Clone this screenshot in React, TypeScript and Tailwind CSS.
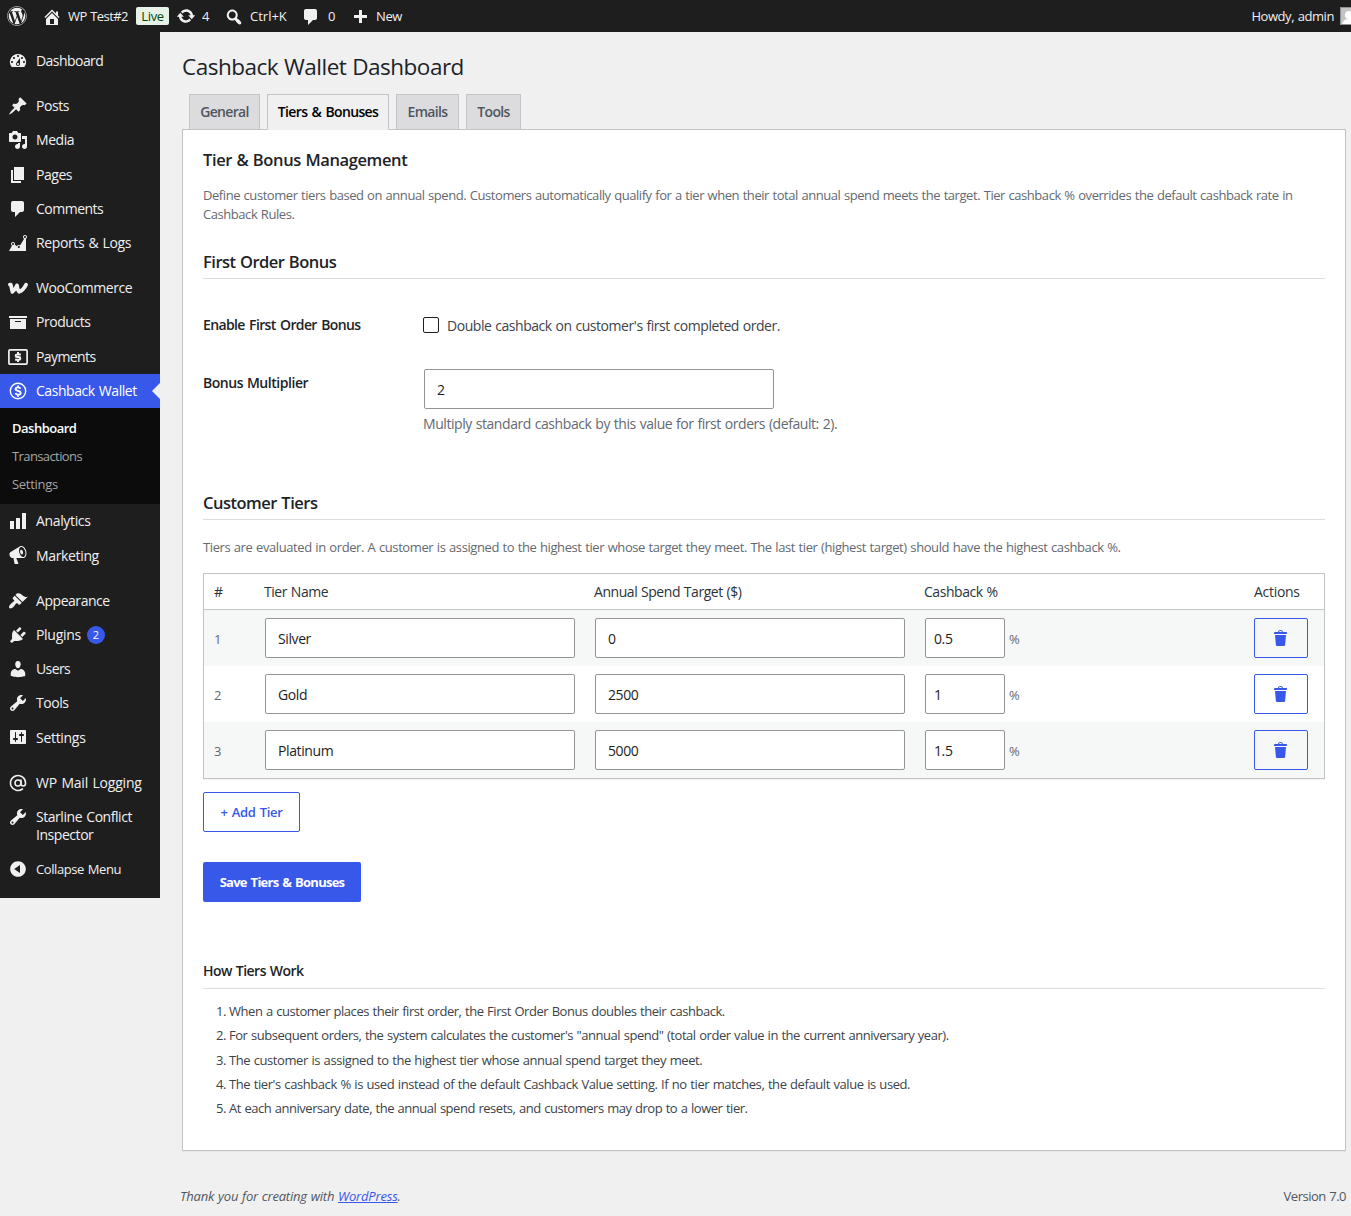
import React, { useState } from 'react';
import { AtSign } from 'lucide-react';
import { FaWordpress } from 'react-icons/fa';
import clsx from 'clsx';

const ICONS = {
  dashboard: 'M3.76 16h12.48A7.998 7.998 0 0 0 10 3a7.998 7.998 0 0 0-6.24 13zM10 4c.55 0 1 .45 1 1s-.45 1-1 1-1-.45-1-1 .45-1 1-1zM6 6c.55 0 1 .45 1 1s-.45 1-1 1-1-.45-1-1 .45-1 1-1zm8 0c.55 0 1 .45 1 1s-.45 1-1 1-1-.45-1-1 .45-1 1-1zm-5.37 5.55L12 7v6c0 1.1-.9 2-2 2s-2-.9-2-2c0-.57.24-1.08.63-1.45zM4 10c.55 0 1 .45 1 1s-.45 1-1 1-1-.45-1-1 .45-1 1-1zm12 0c.55 0 1 .45 1 1s-.45 1-1 1-1-.45-1-1 .45-1 1-1zm-5 3c0-.55-.45-1-1-1s-1 .45-1 1 .45 1 1 1 1-.45 1-1z',
  post: 'M10.44 3.02l1.82-1.82 6.36 6.35-1.83 1.82c-1.05-.68-2.48-.57-3.41.36l-.75.75c-.92.93-1.04 2.35-.35 3.41l-1.83 1.82-2.41-2.41-2.8 2.79c-.42.42-3.38 2.71-3.8 2.29s1.86-3.39 2.28-3.81l2.79-2.79L4.1 9.36l1.83-1.82c1.05.69 2.48.57 3.4-.36l.75-.75c.93-.92 1.05-2.35.36-3.41z',
  media: 'M13 11V4c0-.55-.45-1-1-1h-1.67L9 1H5L3.67 3H2c-.55 0-1 .45-1 1v7c0 .55.45 1 1 1h10c.55 0 1-.45 1-1zM7 4.5c1.38 0 2.5 1.12 2.5 2.5S8.38 9.5 7 9.5 4.5 8.38 4.5 7 5.62 4.5 7 4.5zM14 6h5v10.5c0 1.38-1.12 2.5-2.5 2.5S14 17.88 14 16.5s1.12-2.5 2.5-2.5c.17 0 .34.02.5.05V9h-3V6zm-4 8.05V13h2v3.5c0 1.38-1.12 2.5-2.5 2.5S7 17.88 7 16.5 8.12 14 9.5 14c.17 0 .34.02.5.05z',
  page: 'M6 15V2h10v13H6zm-1 1h8v2H3V5h2v11z',
  comments: 'M5 2h9c1.1 0 2 .9 2 2v7c0 1.1-.9 2-2 2h-2l-5 5v-5H5c-1.1 0-2-.9-2-2V4c0-1.1.9-2 2-2z',
  chartArea: 'M18 18l.01-12.28c.59-.35.99-.99.99-1.72 0-1.1-.9-2-2-2s-2 .9-2 2c0 .8.47 1.48 1.14 1.8l-4.13 6.58c-.33-.24-.73-.38-1.16-.38-.84 0-1.55.51-1.85 1.24l-2.14-1.53c.09-.22.14-.46.14-.71 0-1.11-.89-2-2-2-1.1 0-2 .89-2 2 0 .73.4 1.36.98 1.71L1 18h17zM17 3c.55 0 1 .45 1 1s-.45 1-1 1-1-.45-1-1 .45-1 1-1zM5 10c.55 0 1 .45 1 1s-.45 1-1 1-1-.45-1-1 .45-1 1-1zm5.85 3c.55 0 1 .45 1 1s-.45 1-1 1-1-.45-1-1 .45-1 1-1z',
  archive: 'M19 4v2H1V4h18zM2 7h16v10H2V7zm11 3V9H7v1h6z',
  chartBar: 'M18 18V2h-4v16h4zm-6 0V7H8v11h4zm-6 0v-8H2v8h4z',
  megaphone: 'M18.15 5.94c.46 1.62.38 3.22-.02 4.48-.42 1.28-1.26 2.18-2.3 2.48-.16.06-.26.06-.4.06-.06.02-.12.02-.18.02-.06.02-.14.02-.22.02h-6.8l2.22 5.5c.02.14-.06.26-.14.34-.08.1-.24.16-.34.16H6.95c-.1 0-.26-.06-.34-.16-.08-.08-.16-.2-.14-.34l-1-5.5H4.25l-.02-.02c-.5.06-1.08-.18-1.54-.62s-.88-1.08-1.06-1.88c-.24-.8-.2-1.56-.02-2.2.18-.62.58-1.08 1.06-1.3l.02-.02 9-5.4c.1-.06.18-.1.24-.16.06-.04.14-.08.24-.12.16-.08.28-.12.5-.18 1.04-.3 2.24.1 3.22.98s1.84 2.24 2.26 3.86zm-2.58 5.98h-.02c.4-.1.74-.34 1.04-.7.58-.7.86-1.76.86-3.04 0-.64-.1-1.3-.28-1.98-.34-1.36-1.02-2.5-1.78-3.24s-1.68-1.1-2.46-.88c-.82.22-1.4.96-1.7 2-.32 1.04-.28 2.36.06 3.72.38 1.36 1 2.5 1.8 3.24.78.74 1.62 1.1 2.48.88zm-2.54-7.08c.22-.04.42-.02.62.04.38.16.76.48 1.02 1s.42 1.2.42 1.78c0 .3-.04.56-.12.8-.18.48-.44.84-.86.94-.34.1-.8-.06-1.14-.4s-.64-.86-.78-1.5c-.18-.62-.12-1.24.02-1.72s.48-.84.82-.94z',
  appearance: 'M14.48 11.06L7.41 3.99l1.5-1.5c.5-.56 2.3-.47 3.51.32 1.21.8 1.43 1.28 2.91 2.1 1.18.64 2.45 1.26 4.45.85zm-.71.71L6.7 4.7 4.93 6.47c-.39.39-.39 1.02 0 1.41l1.06 1.06c.39.39.39 1.03 0 1.42-.6.6-1.43 1.11-2.21 1.69-.35.26-.7.53-1.01.84C1.43 14.23.4 16.08 1.4 17.07c.99 1 2.84-.03 4.18-1.36.31-.31.58-.66.85-1.02.57-.78 1.08-1.61 1.69-2.21.39-.39 1.02-.39 1.41 0l1.06 1.06c.39.39 1.02.39 1.41 0z',
  plugins: 'M13.11 4.36L9.87 7.6 8 5.73l3.24-3.24c.35-.34 1.05-.2 1.56.32.52.51.66 1.21.31 1.55zm-8 1.77l.91-1.12 9.01 9.01-1.19.84c-.71.71-2.63 1.16-3.82 1.16H6.14L4.9 17.26c-.59.59-1.54.59-2.12 0-.59-.58-.59-1.53 0-2.12l1.24-1.24v-3.88c0-1.13.4-3.19 1.09-3.89zm7.26 3.97l3.24-3.24c.34-.35 1.04-.21 1.55.31.52.51.66 1.21.31 1.55l-3.24 3.25z',
  users: 'M10 9.25c-2.27 0-2.73-3.44-2.73-3.44C7 4.02 7.82 2 9.97 2c2.16 0 2.98 2.02 2.71 3.81 0 0-.41 3.44-2.68 3.44zm0 2.57L12.72 10c2.39 0 4.52 2.33 4.52 4.53v2.49s-3.65 1.13-7.24 1.13c-3.65 0-7.24-1.13-7.24-1.13v-2.49c0-2.25 1.94-4.48 4.47-4.48z',
  tools: 'M16.68 9.77c-1.34 1.34-3.3 1.67-4.95.99l-5.41 6.52c-.99.99-2.59.99-3.58 0s-.99-2.59 0-3.57l6.52-5.42c-.68-1.65-.35-3.61.99-4.95 1.28-1.28 3.12-1.62 4.72-1.06l-2.89 2.89 2.82 2.82 2.86-2.87c.53 1.58.18 3.39-1.08 4.65zM3.81 16.21c.4.39 1.04.39 1.43 0 .4-.4.4-1.04 0-1.43-.39-.4-1.03-.4-1.43 0-.39.39-.39 1.03 0 1.43z',
  settings: 'M18 16V4c0-.55-.45-1-1-1H3c-.55 0-1 .45-1 1v12c0 .55.45 1 1 1h14c.55 0 1-.45 1-1zM8 11h1c.55 0 1 .45 1 1s-.45 1-1 1H8v1.5c0 .28-.22.5-.5.5s-.5-.22-.5-.5V13H6c-.55 0-1-.45-1-1s.45-1 1-1h1V5.5c0-.28.22-.5.5-.5s.5.22.5.5V11zm5-2h-1c-.55 0-1-.45-1-1s.45-1 1-1h1V5.5c0-.28.22-.5.5-.5s.5.22.5.5V7h1c.55 0 1 .45 1 1s-.45 1-1 1h-1v5.5c0 .28-.22.5-.5.5s-.5-.22-.5-.5V9z',
  collapse: 'M10 2.16c4.33 0 7.84 3.51 7.84 7.84s-3.51 7.84-7.84 7.84S2.16 14.33 2.16 10 5.71 2.16 10 2.16zm2 11.72V6.12L6.18 9.97z',
  home: 'M16 8.5l1.53 1.53-1.06 1.06L10 4.6l-6.47 6.49-1.06-1.06L10 2.5l4 4v-2h2v4zm-6-2.46l6 5.99V18H4v-5.97zM12 17v-5H8v5h4z',
  update: 'M10.2 3.28c3.53 0 6.43 2.61 6.92 6h2.08l-3.5 4-3.5-4h2.32c-.45-1.97-2.21-3.45-4.32-3.45-1.45 0-2.73.71-3.54 1.78L4.95 5.66C6.23 4.2 8.11 3.28 10.2 3.28zm-.4 13.44c-3.52 0-6.43-2.61-6.92-6H.8l3.5-4c1.17 1.33 2.33 2.67 3.5 4H5.48c.45 1.97 2.21 3.45 4.32 3.45 1.45 0 2.73-.71 3.54-1.78l1.71 1.95c-1.28 1.46-3.15 2.38-5.25 2.38z',
  search: 'M12.14 4.18c1.87 1.87 2.11 4.75.72 6.89.12.1.22.21.36.31.2.16.47.36.81.59.34.24.56.39.66.47.42.31.73.57.94.78.32.32.6.65.84 1 .25.35.44.69.59 1.04.14.35.21.68.18 1-.02.32-.14.59-.36.81s-.49.34-.81.36c-.31.02-.65-.04-.99-.19-.35-.14-.7-.34-1.04-.59-.35-.24-.68-.52-1-.84-.21-.21-.47-.52-.77-.93-.1-.13-.25-.35-.47-.66-.22-.32-.4-.57-.56-.78-.16-.2-.29-.35-.44-.5-2.07 1.09-4.69.76-6.44-.98-2.14-2.15-2.14-5.64 0-7.78 2.15-2.15 5.63-2.15 7.78 0zm-1.41 6.36c1.36-1.37 1.36-3.58 0-4.95-1.37-1.37-3.59-1.37-4.95 0-1.37 1.37-1.37 3.58 0 4.95 1.36 1.37 3.58 1.37 4.95 0z',
  plus: 'M17 7v3h-5v5H9v-5H4V7h5V2h3v5h5z',
  trash: 'M12 4h3c.6 0 1 .4 1 1v1H3V5c0-.6.5-1 1-1h3c.2-1.1 1.3-2 2.5-2s2.3.9 2.5 2zM8 4h3c-.2-.6-.9-1-1.5-1S8.2 3.4 8 4zM4 7h11l-.9 10.1c0 .5-.5.9-1 .9H5.9c-.5 0-.9-.4-1-.9L4 7z',
};

type IconName = keyof typeof ICONS;

function Dashicon({ name, className = 'size-5' }: { name: IconName; className?: string }) {
  return (
    <svg viewBox="0 0 20 20" fill="currentColor" fillRule="evenodd" className={clsx('shrink-0', className)}>
      <path d={ICONS[name]} />
    </svg>
  );
}

function WooIcon() {
  return (
    <svg viewBox="0 0 20 20" className="size-5 shrink-0" fill="none" stroke="currentColor" strokeWidth="3.8" strokeLinecap="round" strokeLinejoin="round">
      <path d="M1.900 6.600h.9l1.600 7.200c2-1.600 3.700-3.900 4.600-6.400.1 2.500.8 4.900 2.100 6.400 2.500-1 5.400-4.100 6.900-7" />
    </svg>
  );
}

function PaymentsIcon() {
  return (
    <svg viewBox="0 0 20 20" className="size-5 shrink-0" fill="none" stroke="currentColor">
      <rect x="0.9" y="2.900" width="18.2" height="14.200" rx="1" strokeWidth="1.700" />
      <path d="M12.900 7.500H9a1.300 1.300 0 0 0 0 2.600h2a1.300 1.300 0 0 1 0 2.600H7.100M10 5v2.400M10 12.600v2.500" strokeWidth="2" />
    </svg>
  );
}

function CashbackIcon() {
  return (
    <svg viewBox="0 0 20 20" className="size-5 shrink-0" fill="none" stroke="currentColor">
      <circle cx="10" cy="10" r="7.700" strokeWidth="1.400" />
      <path d="M12.400 7.800c-.3-1-1.200-1.400-2.400-1.400-1.400 0-2.400.6-2.400 1.700 0 2.500 5 1.200 5 3.800 0 1.100-1.100 1.800-2.500 1.800-1.400 0-2.300-.6-2.600-1.700M10 4.400v2M10 13.500v2.200" strokeWidth="1.900" />
    </svg>
  );
}

interface MenuItemProps {
  icon: React.ReactNode;
  label: string;
  active?: boolean;
  badge?: number;
  labelClass?: string;
}

function MenuItem({ icon, label, active, badge, labelClass = 'tracking-[-0.45px]' }: MenuItemProps) {
  return (
    <li className={clsx('relative flex min-h-[34.2px] text-[14px] leading-[18.2px]', active ? 'bg-[#3858e9] text-white' : 'text-[#f0f0f1]')}>
      <span className="flex h-[33.9px] w-9 shrink-0 items-center justify-center">{icon}</span>
      <span className={clsx('w-[112px] py-2', labelClass)}>{label}</span>
      {badge && (
        <span className="absolute left-[87px] top-[8.4px] flex size-[18px] items-center justify-center rounded-full bg-[#3858e9] text-[11px] text-white">
          {badge}
        </span>
      )}
      {active && <span className="absolute right-0 top-[9px] border-y-8 border-r-8 border-y-transparent border-r-[#f0f0f1]" />}
    </li>
  );
}

function Separator() {
  return <li className="h-[11px]" />;
}

function Sidebar() {
  return (
    <ul className="w-40 shrink-0 self-start bg-[#1e1e1e] pb-[11.7px] pt-3 [word-spacing:1px]">
      <MenuItem icon={<Dashicon name="dashboard" />} label="Dashboard" labelClass="tracking-[-0.55px]" />
      <Separator />
      <MenuItem icon={<Dashicon name="post" />} label="Posts" />
      <MenuItem icon={<Dashicon name="media" />} label="Media" />
      <MenuItem icon={<Dashicon name="page" />} label="Pages" />
      <MenuItem icon={<Dashicon name="comments" />} label="Comments" labelClass="tracking-[-0.5px]" />
      <MenuItem icon={<Dashicon name="chartArea" />} label="Reports & Logs" labelClass="tracking-[-0.38px]" />
      <Separator />
      <MenuItem icon={<WooIcon />} label="WooCommerce" />
      <MenuItem icon={<Dashicon name="archive" />} label="Products" />
      <MenuItem icon={<PaymentsIcon />} label="Payments" labelClass="tracking-[-0.6px]" />
      <MenuItem icon={<CashbackIcon />} label="Cashback Wallet" active />
      <li className="bg-[#0c0c0c] pb-[6.3px] pl-3 pt-1.5 text-[13px] leading-7 text-[#a5a5a5]">
        <div className="font-semibold tracking-[-0.5px] text-white">Dashboard</div>
        <div className="tracking-[-0.6px]">Transactions</div>
        <div className="tracking-[-0.3px]">Settings</div>
      </li>
      <MenuItem icon={<Dashicon name="chartBar" />} label="Analytics" labelClass="tracking-[-0.35px]" />
      <MenuItem icon={<Dashicon name="megaphone" />} label="Marketing" labelClass="tracking-[-0.35px]" />
      <Separator />
      <MenuItem icon={<Dashicon name="appearance" />} label="Appearance" />
      <MenuItem icon={<Dashicon name="plugins" />} label="Plugins" badge={2} labelClass="tracking-[-0.3px]" />
      <MenuItem icon={<Dashicon name="users" />} label="Users" labelClass="tracking-[-0.6px]" />
      <MenuItem icon={<Dashicon name="tools" />} label="Tools" />
      <MenuItem icon={<Dashicon name="settings" />} label="Settings" labelClass="tracking-[-0.3px]" />
      <Separator />
      <MenuItem icon={<AtSign className="size-[18px]" strokeWidth={2.1} />} label="WP Mail Logging" labelClass="tracking-[-0.2px]" />
      <MenuItem icon={<Dashicon name="tools" />} label="Starline Conflict Inspector" />
      <MenuItem icon={<Dashicon name="collapse" />} label="Collapse Menu" labelClass="text-[13px] tracking-[-0.42px]" />
    </ul>
  );
}

function AdminBar() {
  return (
    <header className="flex h-8 items-center overflow-hidden bg-[#1e1e1e] text-[13px] text-[#f0f0f1]">
      <div className="w-[42px] pl-[7px]">
        <FaWordpress className="size-5" />
      </div>
      <div className="flex w-[94px] items-center gap-1.5 whitespace-nowrap">
        <Dashicon name="home" className="mt-px size-5" />
        <span className="pt-0.5 tracking-[-0.55px]">WP Test#2</span>
      </div>
      <div className="flex h-[18px] w-[33px] items-center justify-center rounded-[2px] bg-[#e6f2e8] text-[#00450c]">
        <span className="pt-0.5 tracking-[-0.4px]">Live</span>
      </div>
      <div className="flex w-[55px] items-center gap-1.5 pl-[7px]">
        <Dashicon name="update" />
        <span className="pt-0.5">4</span>
      </div>
      <div className="flex w-[77px] items-center gap-1.5">
        <Dashicon name="search" className="mt-px size-5" />
        <span className="pt-0.5">Ctrl+K</span>
      </div>
      <div className="flex w-[49px] items-center gap-[7px]">
        <Dashicon name="comments" className="mt-0.5 size-5" />
        <span className="pt-0.5">0</span>
      </div>
      <div className="flex items-center gap-1.5">
        <Dashicon name="plus" className="mt-[3px] size-5" />
        <span className="pt-0.5 tracking-[-0.4px]">New</span>
      </div>
      <div className="ml-auto flex items-center gap-1.5">
        <span className="pt-0.5 tracking-[-0.43px]">Howdy, admin</span>
        <span className="flex h-[18px] w-[11px] overflow-hidden border border-r-0 border-[#8c8f94] bg-[#c4c4c4]">
          <svg viewBox="0 0 16 16" className="size-4 shrink-0" fill="#fff">
            <circle cx="8" cy="7" r="4" />
            <path d="M1 16c1-4 4-5 7-5s6 1 7 5z" />
          </svg>
        </span>
      </div>
    </header>
  );
}

const TABS = [
  { label: 'General', width: 'w-[71px]' },
  { label: 'Tiers & Bonuses', width: 'w-[122px]' },
  { label: 'Emails', width: 'w-[63px]' },
  { label: 'Tools', width: 'w-[55px]' },
];

const TIERS = [
  { name: 'Silver', target: '0', cashback: '0.5' },
  { name: 'Gold', target: '2500', cashback: '1' },
  { name: 'Platinum', target: '5000', cashback: '1.5' },
];

const RULES = [
  { text: 'When a customer places their first order, the First Order Bonus doubles their cashback.', tracking: 'tracking-[-0.46px]' },
  { text: 'For subsequent orders, the system calculates the customer\'s "annual spend" (total order value in the current anniversary year).', tracking: 'tracking-[-0.46px]' },
  { text: 'The customer is assigned to the highest tier whose annual spend target they meet.', tracking: 'tracking-[-0.42px]' },
  { text: "The tier's cashback % is used instead of the default Cashback Value setting. If no tier matches, the default value is used.", tracking: 'tracking-[-0.42px]' },
  { text: 'At each anniversary date, the annual spend resets, and customers may drop to a lower tier.', tracking: 'tracking-[-0.47px]' },
];

const inputClass = 'h-10 rounded-[2px] border border-[#949494] bg-white text-[14px] tracking-[-0.4px] text-[#1e1e1e] outline-none';
const gridClass = 'grid grid-cols-[50px_330px_330px_330px_1fr] pl-[10px]';
const headingClass = 'border-b border-[#dcdcde] pb-1 text-[16.5px] font-semibold leading-6 tracking-[-0.5px] text-[#1d2327]';

function TierTable() {
  return (
    <div className="mt-4 border border-[#c3c4c7] shadow-[0_1px_1px_rgba(0,0,0,0.04)]">
      <div className={clsx(gridClass, 'h-9 items-center border-b border-[#c3c4c7] text-[14px] tracking-[-0.45px] text-[#2c3338]')}>
        <span>#</span>
        <span>Tier Name</span>
        <span>Annual Spend Target ($)</span>
        <span>Cashback %</span>
        <span className="tracking-[-0.3px]">Actions</span>
      </div>
      {TIERS.map((tier, i) => (
        <div key={tier.name} className={clsx(gridClass, 'h-14 items-center text-[13px] text-[#646970]', i % 2 === 0 && 'bg-[#f6f7f7]')}>
          <span className="pt-[3px]">{i + 1}</span>
          <input defaultValue={tier.name} className={clsx(inputClass, 'ml-px w-[310px] px-3')} />
          <input defaultValue={tier.target} className={clsx(inputClass, 'ml-px w-[310px] px-3')} />
          <div className="flex items-center gap-1 pl-px">
            <input defaultValue={tier.cashback} className={clsx(inputClass, 'w-20 px-2')} />
            <span className="pt-[3px]">%</span>
          </div>
          <button className="flex h-10 w-[54px] items-center justify-center rounded-[2px] border border-[#3858e9] pb-px text-[#3858e9]">
            <Dashicon name="trash" />
          </button>
        </div>
      ))}
    </div>
  );
}

function SettingsPanel() {
  return (
    <main className="h-[1022px] border border-[#c3c4c7] bg-white px-5 pt-[18px] text-[13px] text-[#3c434a] shadow-[0_1px_1px_rgba(0,0,0,0.04)]">
      <h2 className="text-[16.5px] font-semibold leading-6 tracking-[-0.38px] text-[#1d2327]">Tier &amp; Bonus Management</h2>
      <p className="mt-3.5 whitespace-nowrap leading-[19px] tracking-[-0.44px] text-[#646970]">
        Define customer tiers based on annual spend. Customers automatically qualify for a tier when their total annual spend meets the target. Tier cashback % overrides the default cashback rate in
        <br />
        Cashback Rules.
      </p>

      <h3 className={clsx(headingClass, 'mt-[26px]')}>First Order Bonus</h3>
      <div className="mt-[34px] flex h-6 items-center">
        <label className="w-[220px] pb-0.5 text-[14px] font-semibold tracking-[-0.65px] text-[#1d2327] [word-spacing:1.500px]">Enable First Order Bonus</label>
        <span className="size-4 rounded-[2px] border border-[#1e1e1e]" />
        <span className="ml-2 pt-px text-[14px] tracking-[-0.45px]">Double cashback on customer's first completed order.</span>
      </div>
      <div className="mt-8 flex h-[65px]">
        <label className="w-[220px] pt-1 text-[14px] font-semibold leading-5 tracking-[-0.45px] text-[#1d2327]">Bonus Multiplier</label>
        <div>
          <input defaultValue="2" className={clsx(inputClass, 'ml-px block w-[350px] px-3')} />
          <p className="mt-[5px] text-[14px] leading-5 tracking-[-0.43px] text-[#646970]">Multiply standard cashback by this value for first orders (default: 2).</p>
        </div>
      </div>

      <h3 className={clsx(headingClass, 'mt-[57px]')}>Customer Tiers</h3>
      <p className="mt-[17px] whitespace-nowrap leading-5 tracking-[-0.405px] text-[#646970]">
        Tiers are evaluated in order. A customer is assigned to the highest tier whose target they meet. The last tier (highest target) should have the highest cashback %.
      </p>
      <TierTable />
      <button className="mt-[13px] block h-10 w-[97px] rounded-[2px] border border-[#3858e9] pt-0.5 font-semibold tracking-[-0.3px] text-[#3858e9] [word-spacing:1px]">+ Add Tier</button>
      <button className="mt-[30px] block h-10 w-[158px] whitespace-nowrap rounded-[2px] bg-[#3858e9] pt-0.5 font-bold tracking-[-0.75px] text-white [word-spacing:1.200px]">Save Tiers &amp; Bonuses</button>

      <h4 className="mt-[58px] border-b border-[#dcdcde] pb-1.5 text-[14px] font-semibold leading-[22px] tracking-[-0.5px] text-[#1d2327]">How Tiers Work</h4>
      <ol className="mt-[10.8px] pl-[13px]">
        {RULES.map((rule, i) => (
          <li key={i} className="flex h-[24.2px] items-center whitespace-nowrap">
            <span className="w-[13px] tracking-[-0.5px]">{i + 1}.</span>
            <span className={rule.tracking}>{rule.text}</span>
          </li>
        ))}
      </ol>
    </main>
  );
}

export default function App() {
  const [tab, setTab] = useState('Tiers & Bonuses');

  return (
    <div className="min-h-[1216px] w-[1351px] overflow-hidden bg-[#f0f0f1] font-['Open_Sans',sans-serif] text-[13px] [word-spacing:0.6px]">
      <AdminBar />
      <div className="flex">
        <Sidebar />
        <div className="flex-1 pl-[22px] pr-[5px]">
          <h1 className="pt-[19px] text-[22.500px] leading-8 tracking-[-0.500px] text-[#1d2327]">Cashback Wallet Dashboard</h1>
          <nav className="mt-[11px] flex gap-[7px] pl-[7px]">
            {TABS.map((t) => (
              <button
                key={t.label}
                onClick={() => setTab(t.label)}
                className={clsx(
                  'relative -mb-px h-9 whitespace-nowrap border border-[#c3c4c7] pb-0.5 text-[14px] font-semibold tracking-[-0.65px] [word-spacing:1.200px]',
                  t.width,
                  tab === t.label ? 'z-10 border-b-[#f0f0f1] bg-[#f0f0f1] text-black' : 'bg-[#dcdcde] text-[#50575e]',
                )}
              >
                {t.label}
              </button>
            ))}
          </nav>
          <SettingsPanel />
          <footer className="-ml-0.5 mt-[35px] flex justify-between leading-5 text-[#50575e]">
            <p className="italic tracking-[-0.19px]">
              Thank you for creating with <a className="text-[#3858e9] underline">WordPress</a>.
            </p>
            <p className="tracking-[-0.5px]">Version 7.0</p>
          </footer>
        </div>
      </div>
    </div>
  );
}
